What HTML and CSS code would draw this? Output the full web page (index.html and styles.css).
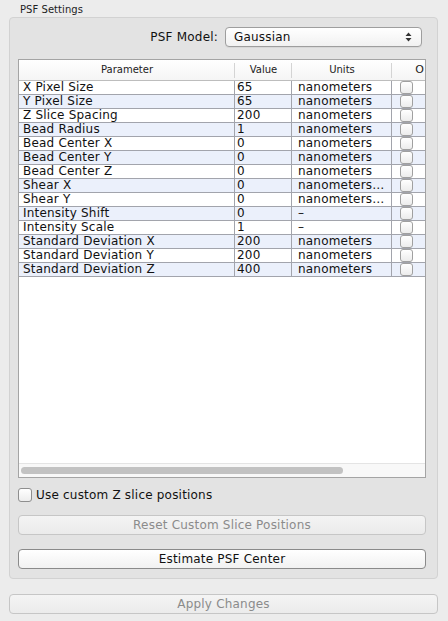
FILE: index.html
```html
<!DOCTYPE html>
<html>
<head>
<meta charset="utf-8">
<link rel="stylesheet" href="styles.css">
</head>
<body>
<div class="legend">PSF Settings</div>
<div class="group">
  <div class="model-row">
    <span class="model-label">PSF Model:</span>
    <div class="select">
      <span>Gaussian</span>
      <svg class="arrows" width="7" height="10" viewBox="0 0 7 10"><path d="M3.5 0.5 L6.5 4 L0.5 4 Z M0.5 6 L6.5 6 L3.5 9.5 Z" fill="#333"/></svg>
    </div>
  </div>
  <div class="table-box">
    <div class="thead">
      <div class="th">Parameter</div>
      <div class="th">Value</div>
      <div class="th">Units</div>
      <div class="th th-last">O</div>
    </div>
    <div class="tbody">
      <div class="tr"><div class="td c1">X Pixel Size</div><div class="td c2">65</div><div class="td c3">nanometers</div><div class="td c4"><span class="cb"></span></div></div>
      <div class="tr alt"><div class="td c1">Y Pixel Size</div><div class="td c2">65</div><div class="td c3">nanometers</div><div class="td c4"><span class="cb"></span></div></div>
      <div class="tr"><div class="td c1">Z Slice Spacing</div><div class="td c2">200</div><div class="td c3">nanometers</div><div class="td c4"><span class="cb"></span></div></div>
      <div class="tr alt"><div class="td c1">Bead Radius</div><div class="td c2">1</div><div class="td c3">nanometers</div><div class="td c4"><span class="cb"></span></div></div>
      <div class="tr"><div class="td c1">Bead Center X</div><div class="td c2">0</div><div class="td c3">nanometers</div><div class="td c4"><span class="cb"></span></div></div>
      <div class="tr alt"><div class="td c1">Bead Center Y</div><div class="td c2">0</div><div class="td c3">nanometers</div><div class="td c4"><span class="cb"></span></div></div>
      <div class="tr"><div class="td c1">Bead Center Z</div><div class="td c2">0</div><div class="td c3">nanometers</div><div class="td c4"><span class="cb"></span></div></div>
      <div class="tr alt"><div class="td c1">Shear X</div><div class="td c2">0</div><div class="td c3">nanometers…</div><div class="td c4"><span class="cb"></span></div></div>
      <div class="tr"><div class="td c1">Shear Y</div><div class="td c2">0</div><div class="td c3">nanometers…</div><div class="td c4"><span class="cb"></span></div></div>
      <div class="tr alt"><div class="td c1">Intensity Shift</div><div class="td c2">0</div><div class="td c3">–</div><div class="td c4"><span class="cb"></span></div></div>
      <div class="tr"><div class="td c1">Intensity Scale</div><div class="td c2">1</div><div class="td c3">–</div><div class="td c4"><span class="cb"></span></div></div>
      <div class="tr alt"><div class="td c1">Standard Deviation X</div><div class="td c2">200</div><div class="td c3">nanometers</div><div class="td c4"><span class="cb"></span></div></div>
      <div class="tr"><div class="td c1">Standard Deviation Y</div><div class="td c2">200</div><div class="td c3">nanometers</div><div class="td c4"><span class="cb"></span></div></div>
      <div class="tr alt"><div class="td c1">Standard Deviation Z</div><div class="td c2">400</div><div class="td c3">nanometers</div><div class="td c4"><span class="cb"></span></div></div>
    </div>
    <div class="filler"></div>
    <div class="hscroll"><div class="thumb"></div></div>
  </div>
  <label class="check-row"><span class="checkbox"></span><span>Use custom Z slice positions</span></label>
  <div class="btn disabled btn-reset">Reset Custom Slice Positions</div>
  <div class="btn btn-estimate">Estimate PSF Center</div>
</div>
<div class="btn disabled btn-apply">Apply Changes</div>
</body>
</html>
```

FILE: styles.css
```css
html, body {
  margin: 0;
  padding: 0;
}
body {
  width: 448px;
  height: 621px;
  background: #ececec;
  font-family: "DejaVu Sans", "Noto Sans", sans-serif;
  font-size: 12px;
  color: #111;
  overflow: hidden;
}
.legend {
  font-size: 10px;
  letter-spacing: 0.05px;
  line-height: 12px;
  padding: 4px 0 0 20px;
  height: 13px;
  color: #222;
}
.group {
  margin: 0 10px 0 9px;
  height: 562px;
  box-sizing: border-box;
  border: 1px solid #d2d2d2;
  border-radius: 4px;
  background: #e3e3e3;
  padding: 7px 11px 0 8px;
  display: flex;
  flex-direction: column;
}
.model-row {
  display: flex;
  justify-content: flex-end;
  align-items: center;
  gap: 7px;
  height: 21px;
  margin-right: 4px;
  margin-top: 1px;
}
.model-label {
  letter-spacing: 0.2px;
  padding-top: 1px;
}
.select {
  width: 197px;
  height: 20px;
  box-sizing: border-box;
  border: 1px solid #9e9e9e;
  border-radius: 4px;
  background: linear-gradient(#ffffff, #f1f1f1);
  display: flex;
  align-items: center;
  justify-content: space-between;
  padding: 0 9px 0 8px;
  letter-spacing: 0.2px;
  box-shadow: 0 1px 0 rgba(0,0,0,0.05);
}
.arrows {
  display: block;
}
.table-box {
  margin-top: 12px;
  width: 408px;
  height: 419px;
  box-sizing: border-box;
  border: 1px solid #a4a4a4;
  background: #fff;
  display: flex;
  flex-direction: column;
  overflow: hidden;
}
.thead {
  display: grid;
  grid-template-columns: 216px 57px 100px 33px;
  height: 21px;
  box-sizing: border-box;
  border-bottom: 1px solid #bdbdbd;
  background: linear-gradient(#ffffff, #f5f5f5);
}
.th {
  font-size: 10px;
  line-height: 20px;
  text-align: center;
  color: #222;
  position: relative;
}
.th::after {
  content: "";
  position: absolute;
  right: 0;
  top: 3px;
  bottom: 2px;
  width: 1px;
  background: #d4d4d4;
}
.th-last {
  text-align: right;
  padding-right: 1px;
  font-size: 11px;
}
.th-last::after {
  display: none;
}
.tr {
  display: grid;
  grid-template-columns: 216px 57px 100px 33px;
  height: 14px;
  box-sizing: border-box;
  border-bottom: 1px solid #a2a4ac;
}
.tr.alt {
  background: #ebf0fb;
}
.td {
  line-height: 13px;
  letter-spacing: 0.2px;
  white-space: nowrap;
  overflow: hidden;
  box-sizing: border-box;
  border-right: 1px solid #a2a4ac;
}
.c1 { padding-left: 4px; }
.c2 { padding-left: 2px; }
.c3 { padding-left: 6px; }
.c4 {
  border-right: none;
  padding-left: 8px;
}
.cb {
  display: block;
  width: 13px;
  height: 13px;
  box-sizing: border-box;
  border: 1px solid #a0a0a0;
  border-radius: 3px;
  background: linear-gradient(#ffffff, #ececec);
}
.filler {
  flex: 1;
}
.hscroll {
  height: 14px;
  box-sizing: border-box;
  border-top: 1px solid #e4e4e4;
  background: #f8f8f8;
  padding: 3px 0 0 2px;
}
.thumb {
  width: 322px;
  height: 7px;
  border-radius: 4px;
  background: #c2c2c2;
}
.check-row {
  display: flex;
  align-items: center;
  gap: 4px;
  margin-top: 10px;
  height: 14px;
  letter-spacing: 0.2px;
}
.checkbox {
  width: 14px;
  height: 14px;
  box-sizing: border-box;
  border: 1px solid #8e8e8e;
  border-radius: 3px;
  background: linear-gradient(#ffffff, #ededed);
}
.btn {
  height: 20px;
  box-sizing: border-box;
  border-radius: 4px;
  display: flex;
  align-items: center;
  justify-content: center;
  letter-spacing: 0.2px;
}
.btn.disabled {
  border: 1px solid #c6c6c6;
  background: linear-gradient(#f4f4f4, #ebebeb);
  color: #8b8b8b;
}
.btn-reset {
  width: 408px;
  margin-top: 13px;
}
.btn-estimate {
  width: 408px;
  margin-top: 14px;
  border: 1px solid #8a8a8a;
  background: linear-gradient(#ffffff, #f1f1f1);
  color: #111;
}
.btn-apply {
  margin: 15px 10px 0 9px;
}
```
